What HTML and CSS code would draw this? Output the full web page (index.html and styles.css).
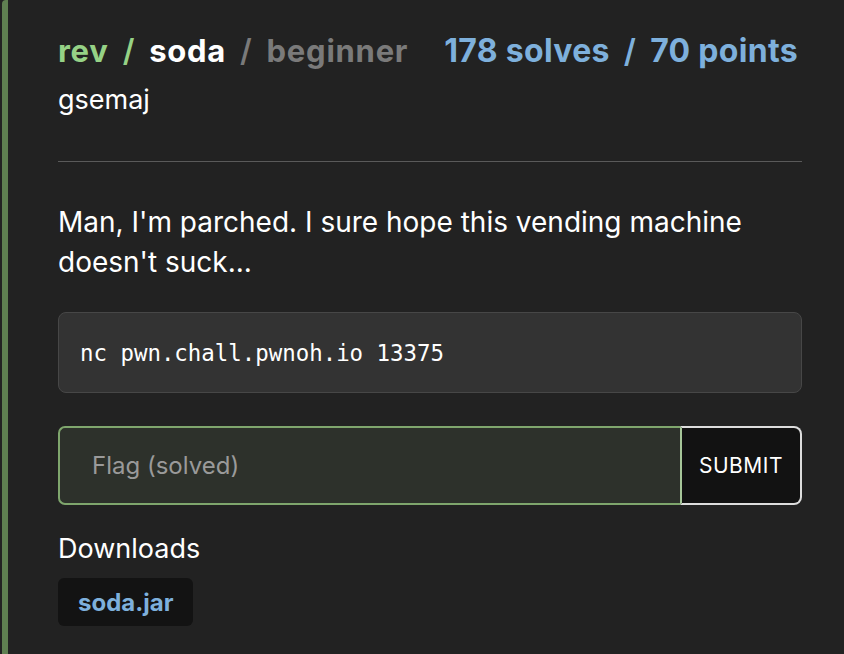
FILE: index.html
```html
<!DOCTYPE html>
<html>
<head>
<meta charset="utf-8">
<link rel="stylesheet" href="styles.css">
</head>
<body>
<div class="card">
  <div class="head">
    <div class="title"><span class="cat">rev<span class="sep">/</span></span><span class="name">soda</span><span class="diff"><span class="sep">/</span>beginner</span></div>
    <div class="stats">178 solves<span class="sep">/</span>70 points</div>
  </div>
  <div class="author">gsemaj</div>
  <hr class="rule">
  <p class="desc">Man, I'm parched. I sure hope this vending machine doesn't suck...</p>
  <div class="code">nc pwn.chall.pwnoh.io 13375</div>
  <div class="flag">
    <div class="flag-input">Flag (solved)</div>
    <div class="flag-btn">SUBMIT</div>
  </div>
  <div class="dl-title">Downloads</div>
  <div class="dl-list"><span class="dl">soda.jar</span></div>
</div>
</body>
</html>
```

FILE: styles.css
```css
html, body {
  margin: 0;
  padding: 0;
  background: #222222;
}
body {
  font-family: Inter, "Noto Sans", sans-serif;
  color: #ffffff;
  padding-left: 2px;
}
.card {
  border-left: 6px solid #5f7f51;
  border-top-left-radius: 4px;
  min-height: 654px;
  padding: 34px 42px 0 50px;
  box-sizing: border-box;
}
.head {
  display: flex;
  gap: 36px;
  align-items: baseline;
  font-size: 31px;
  font-weight: 700;
  line-height: 34px;
  white-space: nowrap;
}
.title {
  letter-spacing: 0.75px;
}
.sep {
  margin: 0 14px;
  font-weight: 600;
}
.cat { color: #96d286; }
.name { color: #ffffff; }
.diff { color: #7a7a7a; }
.stats {
  color: #7eb0dc;
  font-size: 32px;
  letter-spacing: 0.3px;
}
.author {
  font-size: 27px;
  margin-top: 17px;
  line-height: 30px;
}
.rule {
  border: 0;
  border-top: 1px solid #5a5a5a;
  margin: 46px 0 0 0;
}
.desc {
  font-size: 28px;
  line-height: 40px;
  margin: 40px 0 0 0;
}
.code {
  margin-top: 30px;
  background: #333333;
  border: 1px solid #474747;
  border-radius: 8px;
  height: 79px;
  display: flex;
  align-items: center;
  padding-left: 21px;
  font-family: "DejaVu Sans Mono", monospace;
  font-size: 22.4px;
}
.flag {
  margin-top: 33px;
  display: flex;
  height: 79px;
}
.flag-input {
  flex: 1;
  background: #2d312b;
  border: 2px solid #7fa66d;
  border-right: 0;
  border-radius: 7px 0 0 7px;
  display: flex;
  align-items: center;
  padding-left: 32px;
  font-size: 24px;
  color: #9a9a9a;
}
.flag-btn {
  width: 118px;
  background: #121212;
  border: 2px solid #dddddd;
  border-left: 2px solid #a6c699;
  border-radius: 0 8px 8px 0;
  display: flex;
  align-items: center;
  justify-content: center;
  font-size: 21px;
  letter-spacing: 0.5px;
}
.dl-title {
  margin-top: 28px;
  font-size: 27px;
  line-height: 32px;
}
.dl-list {
  margin-top: 13px;
  display: flex;
}
.dl {
  background: #131313;
  border-radius: 6px;
  padding: 0 20px;
  height: 48px;
  display: flex;
  align-items: center;
  color: #7eb0dc;
  font-weight: 700;
  font-size: 24px;
}
```
